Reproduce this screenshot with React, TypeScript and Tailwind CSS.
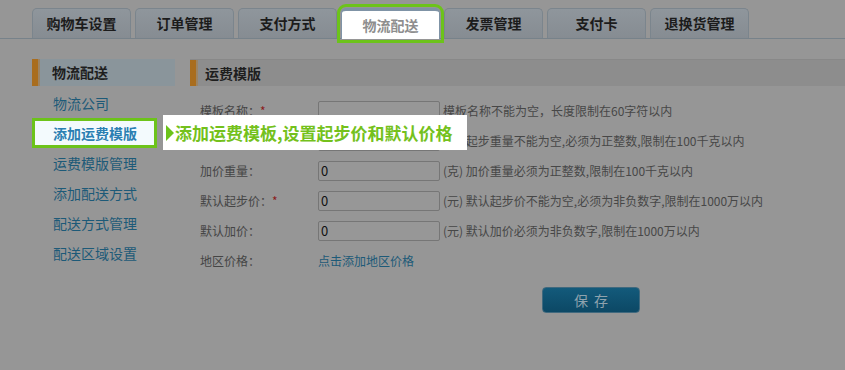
const tabs = ['购物车设置', '订单管理', '支付方式', '物流配送', '发票管理', '支付卡', '退换货管理'];
const menu = ['物流公司', '添加运费模版', '运费模版管理', '添加配送方式', '配送方式管理', '配送区域设置'];

const rows = [
  { label: '模板名称：', required: true, value: '', hint: '模板名称不能为空，长度限制在60字符以内' },
  { label: '起步重量：', required: true, value: '0', hint: '(克) 起步重量不能为空,必须为正整数,限制在100千克以内' },
  { label: '加价重量：', required: false, value: '0', hint: '(克) 加价重量必须为正整数,限制在100千克以内' },
  { label: '默认起步价：', required: true, value: '0', hint: '(元) 默认起步价不能为空,必须为非负数字,限制在1000万以内' },
  { label: '默认加价：', required: false, value: '0', hint: '(元) 默认加价必须为非负数字,限制在1000万以内' },
];

export default function App() {
  return (
    <div className="relative w-[845px] h-[370px] overflow-hidden bg-[#969696] font-['Noto_Sans_CJK_SC',sans-serif]">
      {/* Tabs */}
      <div className="flex gap-[4px] pl-[32px] pt-[8px] border-b border-[#77828a]">
        {tabs.map((t) =>
          t === '物流配送' ? (
            <div
              key={t}
              className="relative z-10 -mb-px w-[99px] h-[31px] rounded-t-[5px] border-t-[3px] border-x border-[#7f93a6] bg-white flex items-center justify-center text-[14px] font-bold text-[#8e8e8e] outline-[3px] outline-solid outline-[#6cc31a] outline-offset-1"
            >
              {t}
            </div>
          ) : (
            <div
              key={t}
              className="w-[99px] h-[30px] rounded-t-[5px] border border-b-0 border-[#7b858d] bg-gradient-to-b from-[#8f969c] to-[#868c92] flex items-center justify-center text-[14px] font-bold text-[#1c1c1c]"
            >
              {t}
            </div>
          )
        )}
      </div>

      <div className="flex mt-[20px]">
        {/* Sidebar */}
        <div className="ml-[32px] w-[143px] shrink-0">
          <div className="h-[27px] flex bg-[#8a959b]">
            <div className="w-[8px] bg-[#a96d1e] border-r-2 border-[#9c8464]" />
            <span className="pl-[12px] leading-[27px] text-[14px] font-bold text-[#1e1e1e]">物流配送</span>
          </div>
          <div className="pt-[2px]">
            {menu.map((m) =>
              m === '添加运费模版' ? (
                <div
                  key={m}
                  className="relative z-10 w-[125px] h-[30px] border-[3px] border-[#6cc31a] bg-[#f3fafd] pl-[18px] leading-[24px] text-[14px] font-bold text-[#2b7fb2]"
                >
                  {m}
                </div>
              ) : (
                <div key={m} className="h-[30px] pl-[21px] leading-[30px] text-[14px] text-[#1d5a78]">
                  {m}
                </div>
              )
            )}
          </div>
        </div>

        {/* Content */}
        <div className="ml-[15px] flex-1">
          <div className="h-[27px] flex bg-[#8d8d8d] border-t border-[#888888]">
            <div className="w-[8px] bg-[#a96d1e] border-r-2 border-[#9c8464]" />
            <span className="pl-[7px] leading-[26px] text-[14px] font-bold text-[#1e1e1e]">运费模版</span>
          </div>
          <div className="pt-[10px] pl-[10px]">
            {rows.map((r) => (
              <div key={r.label} className="h-[30px] flex items-center text-[12px]">
                <div className="w-[118px] text-[#454545]">
                  {r.label}
                  {r.required && <span className="text-[#8b1c1c]">*</span>}
                </div>
                <div className="w-[122px] h-[20px] rounded-[2px] border border-[#767676] bg-[#979797] pl-[2px] leading-[18px] text-[13px] text-[#111111]">
                  {r.value}
                </div>
                <span className="ml-[3px] text-[#474747] whitespace-nowrap">{r.hint}</span>
              </div>
            ))}
            <div className="h-[30px] flex items-center text-[12px]">
              <div className="w-[118px] text-[#454545]">地区价格：</div>
              <span className="text-[#1d5a78]">点击添加地区价格</span>
            </div>
            <div className="mt-[11px] ml-[342px] w-[98px] h-[26px] rounded-[4px] border border-[#40697e] bg-gradient-to-b from-[#135a7b] to-[#0c4865] flex items-center justify-center pl-[6px] text-[14px] tracking-[6px] text-[#8fa3ae]">
              保存
            </div>
          </div>
        </div>
      </div>

      {/* Guide tooltip */}
      <div className="absolute z-20 left-[163px] top-[115px] w-[304px] h-[35px] bg-white flex items-center">
        <div className="ml-[3px] w-0 h-0 border-y-[8px] border-y-transparent border-l-[8px] border-l-[#6cc31a]" />
        <span className="ml-[1px] text-[17px] font-bold text-[#74c11c] whitespace-nowrap">添加运费模板,设置起步价和默认价格</span>
      </div>
    </div>
  );
}
